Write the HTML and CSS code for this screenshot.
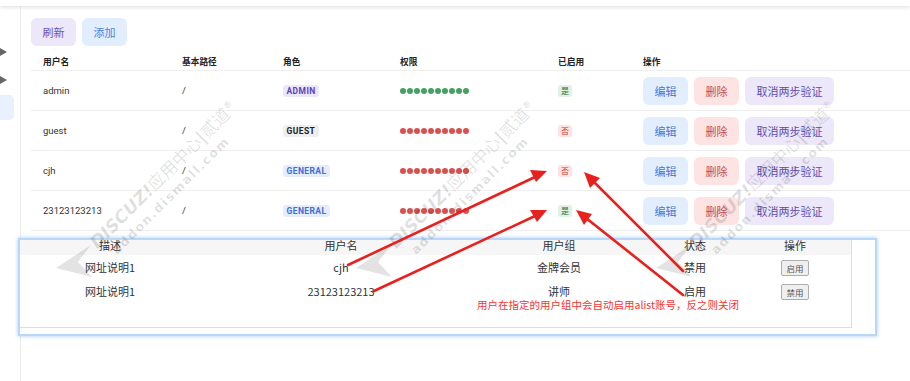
FILE: index.html
```html
<!DOCTYPE html>
<html lang="zh-CN">
<head>
<meta charset="utf-8">
<title>用户管理</title>
<link rel="stylesheet" href="styles.css">
</head>
<body>
<div class="topbar"></div>
<div class="layout">
  <aside class="side">
    <span class="tri"></span>
    <span class="tri"></span>
    <span class="active"></span>
  </aside>
  <main class="main">
    <div class="toolbar">
      <button class="btn btn-purple">刷新</button>
      <button class="btn btn-blue">添加</button>
    </div>
    <div class="table">
      <div class="row head">
        <div class="cell">用户名</div>
        <div class="cell">基本路径</div>
        <div class="cell">角色</div>
        <div class="cell">权限</div>
        <div class="cell">已启用</div>
        <div class="cell">操作</div>
      </div>
      <div class="row">
        <div class="cell">admin</div>
        <div class="cell">/</div>
        <div class="cell"><span class="tag tag-admin">ADMIN</span></div>
        <div class="cell"><span class="dots green"><i></i><i></i><i></i><i></i><i></i><i></i><i></i><i></i><i></i><i></i></span></div>
        <div class="cell"><span class="yn yes">是</span></div>
        <div class="cell ops"><button class="btn btn-blue">编辑</button><button class="btn btn-red">删除</button><button class="btn btn-purple">取消两步验证</button></div>
      </div>
      <div class="row">
        <div class="cell">guest</div>
        <div class="cell">/</div>
        <div class="cell"><span class="tag tag-guest">GUEST</span></div>
        <div class="cell"><span class="dots red"><i></i><i></i><i></i><i></i><i></i><i></i><i></i><i></i><i></i><i></i></span></div>
        <div class="cell"><span class="yn no">否</span></div>
        <div class="cell ops"><button class="btn btn-blue">编辑</button><button class="btn btn-red">删除</button><button class="btn btn-purple">取消两步验证</button></div>
      </div>
      <div class="row">
        <div class="cell">cjh</div>
        <div class="cell">/</div>
        <div class="cell"><span class="tag tag-general">GENERAL</span></div>
        <div class="cell"><span class="dots red"><i></i><i></i><i></i><i></i><i></i><i></i><i></i><i></i><i></i><i></i></span></div>
        <div class="cell"><span class="yn no">否</span></div>
        <div class="cell ops"><button class="btn btn-blue">编辑</button><button class="btn btn-red">删除</button><button class="btn btn-purple">取消两步验证</button></div>
      </div>
      <div class="row">
        <div class="cell">23123123213</div>
        <div class="cell">/</div>
        <div class="cell"><span class="tag tag-general">GENERAL</span></div>
        <div class="cell"><span class="dots red"><i></i><i></i><i></i><i></i><i></i><i></i><i></i><i></i><i></i><i></i></span></div>
        <div class="cell"><span class="yn yes">是</span></div>
        <div class="cell ops"><button class="btn btn-blue">编辑</button><button class="btn btn-red">删除</button><button class="btn btn-purple">取消两步验证</button></div>
      </div>
    </div>
  </main>
</div>

<div class="shot">
  <div class="shot-inner">
    <div class="srow shead">
      <div><span class="clip">描述</span></div>
      <div><span class="clip">用户名</span></div>
      <div><span class="clip">用户组</span></div>
      <div><span class="clip">状态</span></div>
      <div><span class="clip">操作</span></div>
    </div>
    <div class="srow">
      <div>网址说明1</div>
      <div>cjh</div>
      <div>金牌会员</div>
      <div>禁用</div>
      <div><span class="sbtn">启用</span></div>
    </div>
    <div class="srow">
      <div>网址说明1</div>
      <div>23123123213</div>
      <div>讲师</div>
      <div>启用</div>
      <div><span class="sbtn">禁用</span></div>
    </div>
  </div>
</div>

<div class="wm wm1"><div class="wm-l1">DISCUZ!<span class="cn">应用中心</span>|<span class="cn">贰道</span><sup>®</sup></div><div class="wm-l2">addon.dismall.com</div></div>
<div class="wm wm2"><div class="wm-l1">DISCUZ!<span class="cn">应用中心</span>|<span class="cn">贰道</span><sup>®</sup></div><div class="wm-l2">addon.dismall.com</div></div>
<div class="wm wm3"><div class="wm-l1">DISCUZ!<span class="cn">应用中心</span>|<span class="cn">贰道</span><sup>®</sup></div><div class="wm-l2">addon.dismall.com</div></div>

<svg class="overlay" width="910" height="381" viewBox="0 0 910 381">
  <g fill="rgba(0,0,0,0.11)">
    <polygon points="56,268 91,245 78,262 92,277"/>
    <polygon points="356,268 391,245 378,262 392,277"/>
    <polygon points="656,268 691,245 678,262 692,277"/>
  </g>
  <g stroke="#e8201e" stroke-width="2.6" stroke-linecap="round" fill="none">
    <line x1="348" y1="265" x2="535" y2="177"/>
    <line x1="374" y1="291" x2="535" y2="216"/>
    <line x1="683" y1="271" x2="593" y2="181"/>
    <line x1="683" y1="295" x2="586" y2="218"/>
  </g>
  <g fill="#e8201e">
    <polygon points="547,171 530,170 536,182"/>
    <polygon points="547,210 530,210 537,222"/>
    <polygon points="584,172 600,178 590,188"/>
    <polygon points="576,210 592,214 584,225"/>
  </g>
</svg>

<div class="note">用户在指定的用户组中会自动启用alist账号，反之则关闭</div>
</body>
</html>
```

FILE: styles.css
```css
* { box-sizing: border-box; }
html, body {
  margin: 0;
  padding: 0;
  background: #fff;
}
body {
  width: 910px;
  height: 381px;
  overflow: hidden;
  position: relative;
  font-family: Roboto, "Noto Sans CJK SC", sans-serif;
  color: #333;
}
.topbar {
  height: 6px;
  background: #fff;
  box-shadow: 0 1px 4px rgba(0,0,0,0.14);
  position: relative;
  z-index: 1;
}
.layout {
  display: flex;
  height: 375px;
}
.side {
  width: 21px;
  flex: none;
  border-right: 1px solid #ececec;
  display: flex;
  flex-direction: column;
  padding-top: 42px;
}
.tri {
  width: 0;
  height: 0;
  border-left: 7px solid #666;
  border-top: 4.5px solid transparent;
  border-bottom: 4.5px solid transparent;
  margin-bottom: 20px;
}
.tri + .tri { margin-bottom: 11px; }
.active {
  width: 14px;
  height: 25px;
  background: #e8f1fd;
  border-radius: 0 5px 5px 0;
}
.main {
  flex: 1;
  padding: 12px 0 0 10px;
}
.toolbar {
  display: flex;
  gap: 6px;
}
.btn {
  height: 28px;
  padding: 0 11.5px;
  border: none;
  border-radius: 6px;
  font-family: "Noto Sans CJK SC", sans-serif;
  font-size: 11px;
  line-height: 28px;
  cursor: pointer;
}
.btn-purple { background: #ece7f9; color: #5e4bab; }
.btn-blue { background: #e2eefe; color: #4678d8; }
.btn-red { background: #fde4e3; color: #c94a48; }
.toolbar .btn-purple { color: #6a54b8; }
.toolbar .btn-blue { color: #4a82e0; }

.table { margin-top: 6px; }
.row {
  display: grid;
  grid-template-columns: 139px 101px 117px 158px 85px 1fr;
  align-items: center;
  height: 40px;
  border-bottom: 1px solid #efefef;
  font-size: 9.5px;
  color: #333;
}
.row.head {
  height: 19px;
  font-family: "Noto Sans CJK SC", sans-serif;
  font-size: 8.7px;
  font-weight: 700;
  color: #222;
}
.cell { padding-left: 12px; }
.ops {
  display: flex;
  gap: 6px;
}
.tag {
  display: inline-block;
  height: 12px;
  line-height: 12px;
  padding: 0 3.5px;
  border-radius: 3px;
  font-size: 8.5px;
  font-weight: 700;
  letter-spacing: 0.4px;
  vertical-align: middle;
}
.tag-admin { background: #ece6fb; color: #5b3fbf; }
.tag-guest { background: #eceeef; color: #222; }
.tag-general { background: #e3edfd; color: #3f6fd8; }
.dots {
  display: flex;
  gap: 1px;
}
.dots i {
  width: 6px;
  height: 6px;
  border-radius: 50%;
}
.dots.green i { background: #46a063; }
.dots.red i { background: #d8514f; }
.yn {
  display: inline-block;
  height: 12px;
  line-height: 12px;
  padding: 0 3px;
  border-radius: 3px;
  font-family: "Noto Sans CJK SC", sans-serif;
  font-size: 8px;
  vertical-align: middle;
}
.yes { background: #dff2e4; color: #2f6b3d; }
.no { background: #fde3e3; color: #c0403d; }

/* pasted screenshot */
.shot {
  position: absolute;
  left: 18px;
  top: 238px;
  width: 859px;
  height: 98px;
  background: #fff;
  border: 2px solid #b9d7f8;
  box-shadow: 0 0 4px rgba(90,160,235,0.55);
  font-family: "Noto Sans CJK SC", sans-serif;
  font-size: 11px;
  color: #333;
  z-index: 2;
}
.shot-inner {
  width: 832px;
  height: 88px;
  border-right: 1px solid #dedede;
  border-bottom: 1px solid #dedede;
}
.srow {
  display: grid;
  grid-template-columns: 180px 282px 154px 118px 82px;
  height: 24px;
  line-height: 14px;
  align-items: center;
  text-align: center;
}
.srow.shead {
  height: 15px;
  background: #f6f6f6;
  overflow: hidden;
  align-items: start;
}
.clip {
  display: block;
  line-height: 15px;
  margin-top: -2px;
}
.sbtn {
  display: inline-block;
  height: 16px;
  line-height: 14px;
  padding: 0 4px;
  border: 1px solid #adadad;
  border-radius: 2px;
  background: #efefef;
  font-size: 8.5px;
  color: #555;
  vertical-align: middle;
}

/* watermarks */
.wm {
  position: absolute;
  transform: rotate(-45deg);
  transform-origin: 0 0;
  white-space: nowrap;
  color: rgba(0,0,0,0.12);
  font-family: "DejaVu Sans", "Noto Sans CJK SC", sans-serif;
  pointer-events: none;
  z-index: 3;
}
.wm1 { left: 84px; top: 236px; }
.wm2 { left: 383px; top: 236px; }
.wm3 { left: 683px; top: 236px; }
.wm-l1 {
  font-size: 17.5px;
  line-height: 19px;
  font-weight: 700;
  font-style: italic;
}
.wm-l1 .cn {
  font-family: "Noto Sans CJK SC", sans-serif;
  font-weight: 400;
  font-style: normal;
  font-size: 17px;
}
.wm-l1 sup { font-size: 9px; font-style: normal; }
.wm-l2 {
  font-size: 12.5px;
  line-height: 19px;
  font-weight: 700;
  letter-spacing: 1.6px;
  padding-left: 10px;
}

.overlay {
  position: absolute;
  left: 0;
  top: 0;
  z-index: 4;
  pointer-events: none;
}
.note {
  position: absolute;
  left: 477px;
  top: 299px;
  font-family: "Noto Sans CJK SC", sans-serif;
  font-size: 10.5px;
  line-height: 12px;
  color: #f53535;
  white-space: nowrap;
  z-index: 5;
}
```
